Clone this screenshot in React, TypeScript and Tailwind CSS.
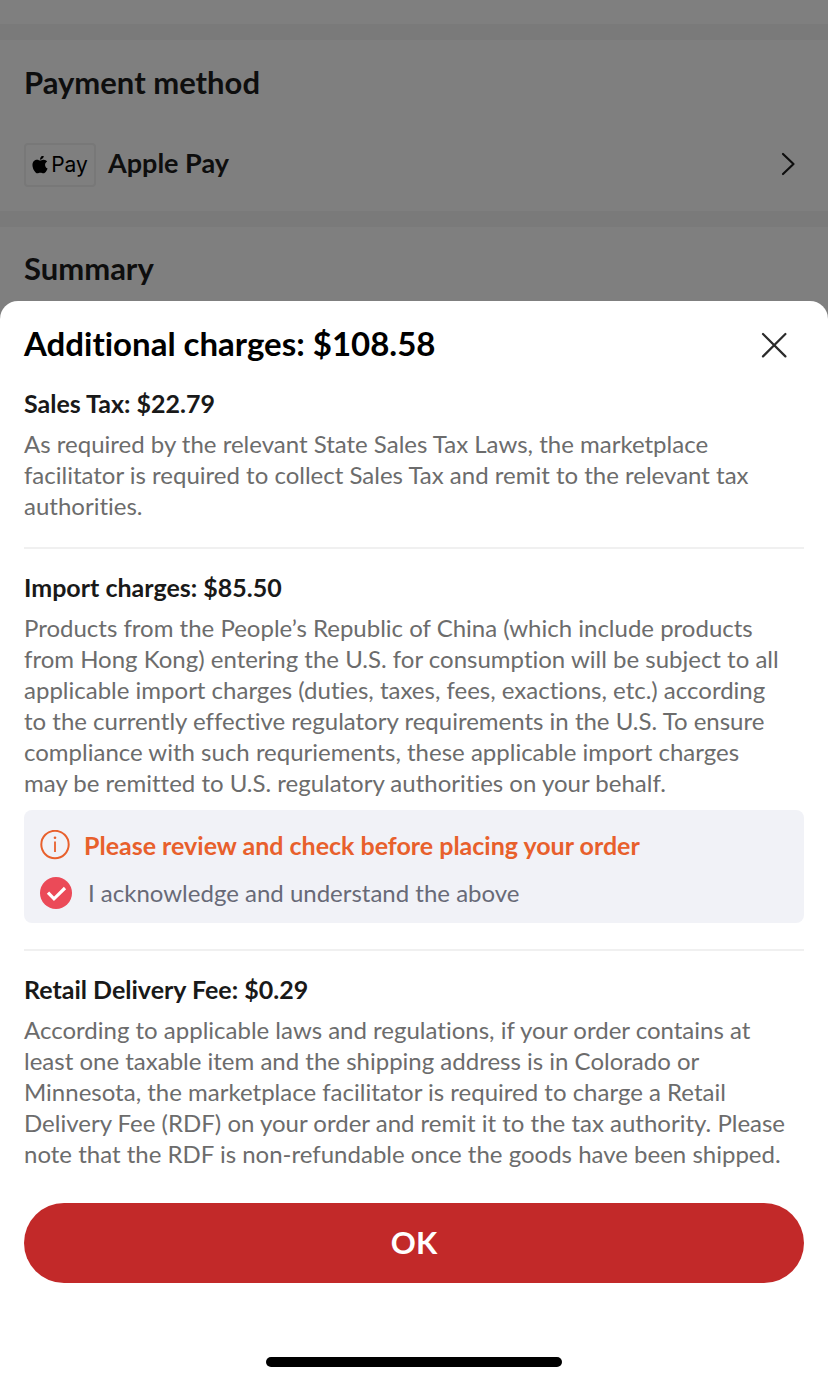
import { useState } from "react";
import { FaApple } from "react-icons/fa6";

const salesTax = `As required by the relevant State Sales Tax Laws, the marketplace
facilitator is required to collect Sales Tax and remit to the relevant tax
authorities.`;

const importCharges = `Products from the People’s Republic of China (which include products
from Hong Kong) entering the U.S. for consumption will be subject to all
applicable import charges (duties, taxes, fees, exactions, etc.) according
to the currently effective regulatory requirements in the U.S. To ensure
compliance with such requriements, these applicable import charges
may be remitted to U.S. regulatory authorities on your behalf.`;

const deliveryFee = `According to applicable laws and regulations, if your order contains at
least one taxable item and the shipping address is in Colorado or
Minnesota, the marketplace facilitator is required to charge a Retail
Delivery Fee (RDF) on your order and remit it to the tax authority. Please
note that the RDF is non-refundable once the goods have been shipped.`;

function Charge({
  title,
  text,
  children,
}: {
  title: string;
  text: string;
  children?: React.ReactNode;
}) {
  return (
    <section className="border-t-2 border-[#f0f0f0] pt-[22px] pb-[26px] first:border-t-0 first:pt-0 last:pb-0">
      <h3 className="text-[25px] leading-8 font-bold text-[#191919]">{title}</h3>
      <p className="mt-[9px] whitespace-pre-line text-[24px] leading-[31px] text-[#6c6c6c]">
        {text}
      </p>
      {children}
    </section>
  );
}

function Acknowledge() {
  const [checked, setChecked] = useState(true);

  return (
    <div className="mt-3 flex flex-col gap-4 rounded-lg bg-[#f1f2f7] px-4 pt-[19px] pb-[14px] leading-8">
      <div className="flex items-center gap-[14px] text-[#e8602c]">
        <svg viewBox="0 0 30 30" className="size-[30px] shrink-0" fill="none" stroke="currentColor">
          <circle cx="15" cy="14.5" r="13.7" strokeWidth="2" />
          <path d="M15 11.6v10.4" strokeWidth="1.8" />
          <circle cx="15" cy="7.8" r="1.3" fill="currentColor" stroke="none" />
        </svg>
        <strong className="text-[25px] font-bold">
          Please review and check before placing your order
        </strong>
      </div>
      <label className="flex items-center gap-4 text-[24px] text-[#686a77]">
        <span className="relative size-8 shrink-0">
          <input
            type="checkbox"
            checked={checked}
            onChange={(e) => setChecked(e.target.checked)}
            className="peer block size-8 appearance-none rounded-full border-2 border-[#b5b7c0] checked:border-0 checked:bg-[#eb4a58]"
          />
          <svg
            viewBox="0 0 32 32"
            className="pointer-events-none absolute inset-0 hidden peer-checked:block"
            fill="none"
            stroke="#fff"
            strokeWidth="3.2"
          >
            <path d="M8 15.6l6 6.2L25 11" />
          </svg>
        </span>
        I acknowledge and understand the above
      </label>
    </div>
  );
}

export default function App() {
  return (
    <div className="relative flex min-h-screen flex-col bg-white font-['Lato',sans-serif] text-[#1c1c1c] [font-variant-ligatures:none]">
      <main>
        <div className="h-6" />
        <section className="border-t-16 border-[#f4f4f4] px-6 pt-[22px] pb-6">
          <h2 className="text-[31px] leading-10 font-bold">Payment method</h2>
          <button type="button" className="mt-[41px] flex w-full items-center gap-3 text-left">
            <span className="flex h-11 w-[72px] items-center justify-center gap-[3px] rounded-sm border-2 border-[#f0f0f0] font-['Inter',sans-serif] text-[21px] text-black">
              <FaApple className="h-[18px] w-4" viewBox="20 48 344 448" />
              Pay
            </span>
            <span className="flex-1 pb-1 text-[27px] leading-8 font-bold">Apple Pay</span>
            <svg viewBox="0 0 32 32" className="size-8" fill="none" stroke="#1c1c1c" strokeWidth="2.2">
              <path d="M11 5l10.500 10L11 25" strokeLinecap="round" strokeLinejoin="round" />
            </svg>
          </button>
        </section>
        <section className="border-t-16 border-[#f4f4f4] px-6 pt-[21px] pb-[13px]">
          <h2 className="text-[31px] leading-10 font-bold">Summary</h2>
        </section>
      </main>

      <div className="absolute inset-0 bg-black/50" />

      <div
        role="dialog"
        aria-labelledby="sheet-title"
        className="relative flex flex-1 flex-col rounded-t-[18px] bg-white px-6"
      >
        <header className="flex items-center justify-between pt-[22px] pb-6 text-black">
          <h2 id="sheet-title" className="text-[33px] leading-10 font-bold">
            Additional charges: $108.58
          </h2>
          <button type="button" aria-label="Close" className="mr-3">
            <svg viewBox="0 0 36 36" className="size-9" fill="none" stroke="#2b2b2b" strokeWidth="2.2">
              <path d="M7 9l22.400 22.400M29.400 9L7 31.400" strokeLinecap="round" />
            </svg>
          </button>
        </header>

        <div>
          <Charge title="Sales Tax: $22.79" text={salesTax} />
          <Charge title="Import charges: $85.50" text={importCharges}>
            <Acknowledge />
          </Charge>
          <Charge title="Retail Delivery Fee: $0.29" text={deliveryFee} />
        </div>

        <button
          type="button"
          className="mt-[34px] h-20 w-full shrink-0 rounded-full bg-[#c22929] pb-[2px] text-[31px] font-bold text-white"
        >
          OK
        </button>

        <div className="mx-auto mt-auto mb-4 h-[10px] w-[296px] rounded-full bg-black" />
      </div>
    </div>
  );
}
